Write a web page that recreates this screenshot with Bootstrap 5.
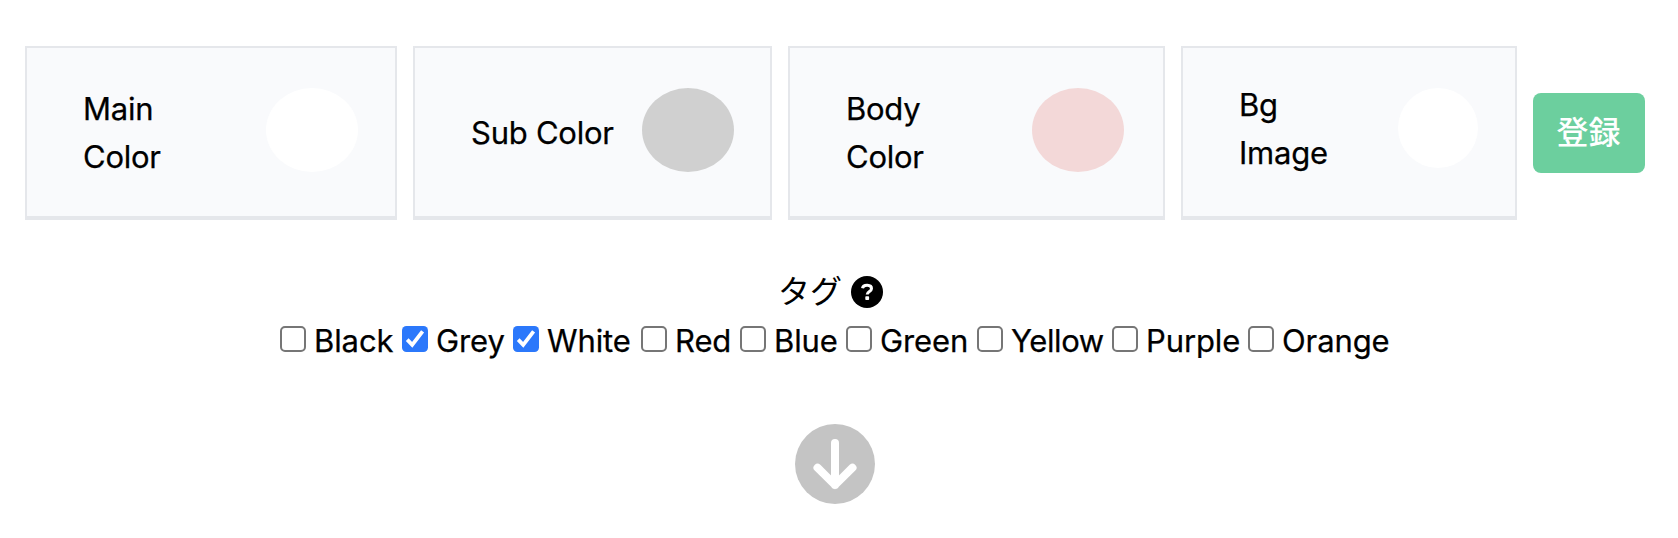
<!DOCTYPE html>
<html lang="ja">
<head>
<meta charset="utf-8">
<title>Color settings</title>
<link href="https://cdn.jsdelivr.net/npm/bootstrap@5.3.0/dist/css/bootstrap.min.css" rel="stylesheet">
<style>
body{font:400 31px/48px Inter,"Noto Sans CJK JP",sans-serif;color:#000;background:#fff;overflow:hidden}
.settings{padding:46px 0 0 25px;gap:16px}
.panel{height:174px;border:2px solid #e5e7eb;border-bottom-width:4px;background:#f9fafc;border-radius:0;padding:40px 37px 0 56px}
.panel:nth-child(1){width:372px}
.panel:nth-child(2){width:359px;padding-right:36px}
.panel:nth-child(3){width:377px;padding-right:39px}
.panel:nth-child(4){width:336px;padding-right:37px}
.panel .caption{height:96px;display:flex;align-items:center;margin-top:-3px;white-space:nowrap;letter-spacing:-.25px;-webkit-text-stroke:.25px #000}
.panel:nth-child(4) .caption{margin-top:-7px}
.swatch{width:92px;height:84px;border-radius:50%}
.swatch.round{width:80px;height:80px}
.btn-save{width:112px;height:80px;border-radius:8px;background:#6ccf9e;color:#fff;font:500 32px/48px Inter,"Noto Sans CJK JP",sans-serif;padding:0 1px 0 0;margin-top:-1px}
.tag-title{margin-top:48px;height:48px;gap:9px;font-size:32px;padding-right:17px}
.tags{padding-left:280px;height:48px}
.tag{height:48px;white-space:nowrap;-webkit-text-stroke:.25px #000}
.tag span{padding-top:1px;letter-spacing:-.1px}
.tag svg{width:26px;height:26px;margin-right:8px;margin-top:-2px;flex:none}
.t-black{width:122px}.t-grey{width:111px}.t-white{width:128px}.t-red{width:99px}.t-blue{width:106px}.t-green{width:131px}.t-yellow{width:135px}.t-purple{width:136px}.t-orange{width:150px}
.t-yellow span{letter-spacing:-.4px}
.scroll-down{padding:60px 0 0 795px}
</style>
</head>
<body>
<svg width="0" height="0" class="position-absolute">
<symbol id="off" viewBox="0 0 26 26"><rect x="1" y="1" width="24" height="24" rx="4" fill="#fff" stroke="#767676" stroke-width="2"/></symbol>
<symbol id="on" viewBox="0 0 26 26"><rect width="26" height="26" rx="4.5" fill="#2b78fb"/><path d="M5.200 13.600l5 5.200L20.600 5.400" fill="none" stroke="#fff" stroke-width="3.800"/></symbol>
</svg>
<form class="settings d-flex align-items-center">
<div class="panel d-flex justify-content-between"><div class="caption"><span>Main<br>Color</span></div><div class="swatch" style="background:#fff"></div></div>
<div class="panel d-flex justify-content-between"><div class="caption"><span>Sub Color</span></div><div class="swatch" style="background:#d0d0d0"></div></div>
<div class="panel d-flex justify-content-between"><div class="caption"><span>Body<br>Color</span></div><div class="swatch" style="background:#f3d8d8"></div></div>
<div class="panel d-flex justify-content-between"><div class="caption"><span>Bg<br>Image</span></div><div class="swatch round" style="background:#fff"></div></div>
<button type="button" class="btn btn-save">登録</button>
</form>
<div class="tag-title d-flex justify-content-center align-items-center"><span>タグ</span>
<svg width="32" height="32" viewBox="0 0 32 32"><circle cx="16" cy="16" r="16"/><path d="M11.500 12.200C12.300 8.200 20.600 8.300 20.500 12.700C20.400 15.600 16.200 15.300 16.200 18.500" fill="none" stroke="#fff" stroke-width="3"/><rect x="14.300" y="20.300" width="3.800" height="3.700" rx=".8" fill="#fff"/></svg></div>
<div class="tags d-flex">
<label class="tag t-black d-flex align-items-center"><svg><use href="#off"/></svg><span>Black</span></label>
<label class="tag t-grey d-flex align-items-center"><svg><use href="#on"/></svg><span>Grey</span></label>
<label class="tag t-white d-flex align-items-center"><svg><use href="#on"/></svg><span>White</span></label>
<label class="tag t-red d-flex align-items-center"><svg><use href="#off"/></svg><span>Red</span></label>
<label class="tag t-blue d-flex align-items-center"><svg><use href="#off"/></svg><span>Blue</span></label>
<label class="tag t-green d-flex align-items-center"><svg><use href="#off"/></svg><span>Green</span></label>
<label class="tag t-yellow d-flex align-items-center"><svg><use href="#off"/></svg><span>Yellow</span></label>
<label class="tag t-purple d-flex align-items-center"><svg><use href="#off"/></svg><span>Purple</span></label>
<label class="tag t-orange d-flex align-items-center"><svg><use href="#off"/></svg><span>Orange</span></label>
</div>
<div class="scroll-down d-flex"><svg width="80" height="80" viewBox="0 0 80 80"><circle cx="40" cy="40" r="40" fill="#c4c4c4"/><path d="M40 19v42M22.500 43.700L40 61l17.500-17.300" fill="none" stroke="#fff" stroke-width="8" stroke-linecap="round" stroke-linejoin="round"/></svg></div>
<script src="https://cdn.jsdelivr.net/npm/bootstrap@5.3.0/dist/js/bootstrap.bundle.min.js"></script>
</body>
</html>
